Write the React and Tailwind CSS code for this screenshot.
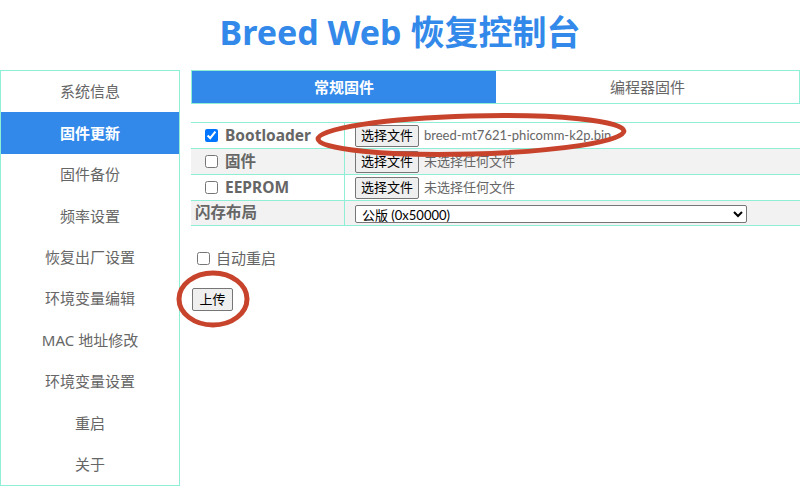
import React from "react";

const FONT = { fontFamily: '"Noto Sans", "Noto Sans CJK SC", sans-serif' };
const LATIN = { fontFamily: 'Lato, "Noto Sans CJK SC", sans-serif' };

const menu = [
  "系统信息",
  "固件更新",
  "固件备份",
  "频率设置",
  "恢复出厂设置",
  "环境变量编辑",
  "MAC 地址修改",
  "环境变量设置",
  "重启",
  "关于",
];

function FileButton() {
  return (
    <button className="h-[22px] w-[64px] text-[13px] leading-none text-black bg-[#efefef] border border-[#767676] rounded-[2px]">
      选择文件
    </button>
  );
}

function Row({ shaded, left, right, last }) {
  return (
    <div
      className={`flex h-[26px] border-t border-[#8eeed6] ${last ? "border-b" : ""} ${
        shaded ? "bg-[#f2f2f2]" : "bg-white"
      }`}
    >
      <div className="w-[154px] flex items-center border-r border-[#8eeed6]">{left}</div>
      <div className="flex-1 flex items-center pl-[10px]">{right}</div>
    </div>
  );
}

function CheckLabel({ label, checked }) {
  return (
    <div className="flex items-center pl-[14px]">
      <input type="checkbox" defaultChecked={checked} className="w-[13px] h-[13px]" />
      <span className="ml-[7px] text-[15.5px] font-bold text-[#666]">{label}</span>
    </div>
  );
}

export default function App() {
  return (
    <div className="relative w-[800px] h-[486px] overflow-hidden bg-white" style={FONT}>
      <div className="h-[70px] flex items-center justify-center">
        <h1 className="text-[34px] font-bold text-[#3389ea] leading-none pb-[7px]">Breed Web 恢复控制台</h1>
      </div>

      <div className="flex">
        <div className="w-[181px] h-[416px] border border-[#8eeed6] flex flex-col">
          {menu.map((m, i) => (
            <div
              key={m}
              className={`h-[41.4px] flex items-center justify-center text-[15px] ${
                i === 1 ? "bg-[#3389ea] text-white font-bold" : "text-[#666]"
              }`}
            >
              {m}
            </div>
          ))}
        </div>

        <div className="ml-[11px] w-[609px] shrink-0">
          <div className="flex h-[34px] border border-[#8eeed6]">
            <div className="w-[304px] bg-[#3389ea] text-white font-bold text-[15px] flex items-center justify-center">
              常规固件
            </div>
            <div className="flex-1 text-[#666] text-[15px] flex items-center justify-center">编程器固件</div>
          </div>

          <div className="mt-[18px]">
            <Row
              left={<CheckLabel label="Bootloader" checked />}
              right={
                <>
                  <FileButton />
                  <span className="ml-[5px] text-[13px] text-[#666]" style={LATIN}>
                    breed-mt7621-phicomm-k2p.bin
                  </span>
                </>
              }
            />
            <Row
              shaded
              left={<CheckLabel label="固件" />}
              right={
                <>
                  <FileButton />
                  <span className="ml-[5px] text-[13px] text-[#666]">未选择任何文件</span>
                </>
              }
            />
            <Row
              left={<CheckLabel label="EEPROM" />}
              right={
                <>
                  <FileButton />
                  <span className="ml-[5px] text-[13px] text-[#666]">未选择任何文件</span>
                </>
              }
            />
            <Row
              shaded
              last
              left={<span className="pl-[4px] text-[15.5px] font-bold text-[#666]">闪存布局</span>}
              right={
                <select
                  className="w-[392px] h-[18px] mt-[1px] text-[13px] leading-none text-black bg-white border border-[#767676] rounded-[2px] pl-[2px]"
                  style={LATIN}
                >
                  <option>公版 (0x50000)</option>
                </select>
              }
            />
          </div>

          <div className="mt-[25px] flex items-center pl-[6px] h-[14px]">
            <input type="checkbox" className="w-[13px] h-[13px]" />
            <span className="ml-[6px] text-[15px] text-[#666]">自动重启</span>
          </div>

          <button className="mt-[23px] ml-[1px] w-[41px] h-[23px] text-[13px] leading-none text-black bg-[#efefef] border border-[#767676] rounded-[2px]">
            上传
          </button>
        </div>
      </div>

      {/* hand-drawn red marks over the form */}
      <svg className="absolute inset-0 pointer-events-none" width="800" height="486">
        <ellipse
          cx="471"
          cy="135"
          rx="153"
          ry="19"
          transform="rotate(-1.5 471 135)"
          fill="none"
          stroke="#c8432c"
          strokeWidth="5"
        />
        <ellipse cx="213" cy="299" rx="34" ry="26" fill="none" stroke="#c8432c" strokeWidth="5" />
      </svg>
    </div>
  );
}
